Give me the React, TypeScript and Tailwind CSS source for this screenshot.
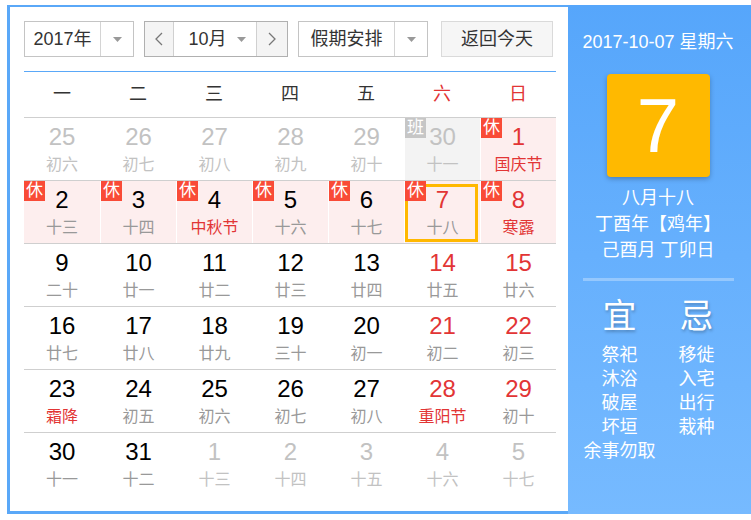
import clsx from 'clsx';

type Day = {
  d: number;
  l: string;
  dim?: boolean;
  red?: boolean;
  lred?: boolean;
  badge?: '休' | '班';
  bg?: 'pink' | 'gray';
  today?: boolean;
};

const weekdays = ['一', '二', '三', '四', '五', '六', '日'];

const rows: Day[][] = [
  [
    { d: 25, l: '初六', dim: true },
    { d: 26, l: '初七', dim: true },
    { d: 27, l: '初八', dim: true },
    { d: 28, l: '初九', dim: true },
    { d: 29, l: '初十', dim: true },
    { d: 30, l: '十一', dim: true, badge: '班', bg: 'gray' },
    { d: 1, l: '国庆节', red: true, lred: true, badge: '休', bg: 'pink' },
  ],
  [
    { d: 2, l: '十三', badge: '休', bg: 'pink' },
    { d: 3, l: '十四', badge: '休', bg: 'pink' },
    { d: 4, l: '中秋节', lred: true, badge: '休', bg: 'pink' },
    { d: 5, l: '十六', badge: '休', bg: 'pink' },
    { d: 6, l: '十七', badge: '休', bg: 'pink' },
    { d: 7, l: '十八', red: true, badge: '休', bg: 'pink', today: true },
    { d: 8, l: '寒露', red: true, lred: true, badge: '休', bg: 'pink' },
  ],
  [
    { d: 9, l: '二十' },
    { d: 10, l: '廿一' },
    { d: 11, l: '廿二' },
    { d: 12, l: '廿三' },
    { d: 13, l: '廿四' },
    { d: 14, l: '廿五', red: true },
    { d: 15, l: '廿六', red: true },
  ],
  [
    { d: 16, l: '廿七' },
    { d: 17, l: '廿八' },
    { d: 18, l: '廿九' },
    { d: 19, l: '三十' },
    { d: 20, l: '初一' },
    { d: 21, l: '初二', red: true },
    { d: 22, l: '初三', red: true },
  ],
  [
    { d: 23, l: '霜降', lred: true },
    { d: 24, l: '初五' },
    { d: 25, l: '初六' },
    { d: 26, l: '初七' },
    { d: 27, l: '初八' },
    { d: 28, l: '重阳节', red: true, lred: true },
    { d: 29, l: '初十', red: true },
  ],
  [
    { d: 30, l: '十一' },
    { d: 31, l: '十二' },
    { d: 1, l: '十三', dim: true },
    { d: 2, l: '十四', dim: true },
    { d: 3, l: '十五', dim: true },
    { d: 4, l: '十六', dim: true },
    { d: 5, l: '十七', dim: true },
  ],
];

const yi = ['祭祀', '沐浴', '破屋', '坏垣', '余事勿取'];
const ji = ['移徙', '入宅', '出行', '栽种'];

function Caret() {
  return (
    <svg width="9" height="5" viewBox="0 0 9 5">
      <path d="M0 0H9L4.5 5Z" fill="#999" />
    </svg>
  );
}

function Chevron({ dir }: { dir: 'l' | 'r' }) {
  return (
    <svg width="8" height="14" viewBox="0 0 8 14">
      <polyline
        points={dir === 'l' ? '7,1 1,7 7,13' : '1,1 7,7 1,13'}
        fill="none"
        stroke="#777"
        strokeWidth="1.3"
      />
    </svg>
  );
}

function Controls() {
  return (
    <div className="flex h-[36px] text-[18px] leading-[34px] text-[#333]">
      <div className="flex w-[110px] border border-[#c4c4c4]">
        <span className="w-[75px] text-center">2017年</span>
        <span className="flex flex-1 items-center justify-center border-l border-[#d4d4d4]">
          <Caret />
        </span>
      </div>
      <div className="ml-[10px] flex w-[144px] border border-[#b0b0b0]">
        <span className="flex w-[29px] items-center justify-center border-r border-[#d0d0d0] bg-[#f4f4f4]">
          <Chevron dir="l" />
        </span>
        <span className="flex w-[82px] items-center justify-center gap-[10px] pl-[4px]">
          10月
          <Caret />
        </span>
        <span className="flex flex-1 items-center justify-center border-l border-[#d0d0d0] bg-[#f4f4f4]">
          <Chevron dir="r" />
        </span>
      </div>
      <div className="ml-[10px] flex w-[130px] border border-[#c4c4c4]">
        <span className="w-[95px] text-center">假期安排</span>
        <span className="flex flex-1 items-center justify-center border-l border-[#d4d4d4]">
          <Caret />
        </span>
      </div>
      <div className="ml-[13px] w-[112px] border border-[#dadada] bg-[#f6f6f6] text-center">返回今天</div>
    </div>
  );
}

function Cell({ day, first }: { day: Day; first: boolean }) {
  return (
    <div
      className={clsx(
        'relative flex flex-col items-center pt-[5px]',
        !first && 'border-l border-white',
        day.bg === 'pink' && 'bg-[#fdeeee]',
        day.bg === 'gray' && 'bg-[#f3f3f3]'
      )}
    >
      {day.today && (
        <div className="absolute top-[3px] right-[2px] bottom-[1px] left-0 border-[3px] border-[#ffb800]" />
      )}
      {day.badge && (
        <span
          className={clsx(
            'absolute top-0 left-0 z-10 h-[20px] w-[21px] text-center text-[17px] leading-[20px] text-white',
            day.badge === '休' ? 'bg-[#f94b37]' : 'bg-[#c6c6c6]'
          )}
        >
          {day.badge}
        </span>
      )}
      <span
        className={clsx(
          'relative text-[24px] leading-[28px]',
          day.dim ? 'text-[#c2c2c2]' : day.red ? 'text-[#e23535]' : 'text-black'
        )}
      >
        {day.d}
      </span>
      <span
        className={clsx(
          'relative mt-[3px] text-[16px] leading-[22px]',
          day.dim ? 'text-[#c2c2c2]' : day.lred ? 'text-[#e23535]' : 'text-[#999]'
        )}
      >
        {day.l}
      </span>
    </div>
  );
}

function Calendar() {
  return (
    <div className="mt-[14px] border-t border-[#5aa8f8]">
      <div className="grid h-[45px] grid-cols-7 items-center text-center text-[18px]">
        {weekdays.map((w, i) => (
          <span key={w} className={i > 4 ? 'text-[#e23535]' : 'text-[#333]'}>
            {w}
          </span>
        ))}
      </div>
      {rows.map((row, r) => (
        <div key={r} className="grid h-[63px] grid-cols-7 border-t border-[#cfcfcf]">
          {row.map((day, i) => (
            <Cell key={i} day={day} first={i === 0} />
          ))}
        </div>
      ))}
    </div>
  );
}

function SidePanel() {
  return (
    <div className="flex w-[183px] flex-col items-center bg-linear-to-b from-[#56a6fb] to-[#76baff] pt-[25px] pr-[3px] text-white">
      <p className="text-[18px] leading-[24px]">2017-10-07 星期六</p>
      <div className="mt-[20px] flex h-[103px] w-[103px] items-center justify-center rounded-[4px] bg-[#ffb900] shadow-[0_2px_5px_rgba(0,0,0,0.25)]">
        <span className="text-[76px] leading-none">7</span>
      </div>
      <div className="mt-[8px] flex flex-col items-center text-[18px] leading-[26px]">
        <p>八月十八</p>
        <p>丁酉年【鸡年】</p>
        <p>己酉月 丁卯日</p>
      </div>
      <div className="mt-[15px] h-[3px] w-[151px] bg-white/30" />
      <div className="mt-[15px] grid w-[154px] grid-cols-2 text-center">
        <div className="flex flex-col items-center">
          <p className="text-[34px] leading-[40px] [text-shadow:1px_2px_3px_rgba(0,0,0,0.25)]">宜</p>
          <div className="mt-[7px] flex flex-col items-center text-[18px] leading-[24px]">
            {yi.map((t) => (
              <p key={t} className="whitespace-nowrap">
                {t}
              </p>
            ))}
          </div>
        </div>
        <div className="flex flex-col items-center">
          <p className="text-[34px] leading-[40px] [text-shadow:1px_2px_3px_rgba(0,0,0,0.25)]">忌</p>
          <div className="mt-[7px] flex flex-col items-center text-[18px] leading-[24px]">
            {ji.map((t) => (
              <p key={t}>{t}</p>
            ))}
          </div>
        </div>
      </div>
    </div>
  );
}

export default function App() {
  return (
    <div className="h-[520px] w-[751px] bg-white pt-[5px] pl-[7px] font-['Liberation_Sans','Noto_Sans_CJK_SC',sans-serif]">
      <div className="flex h-[509px] w-[744px]">
        <div className="w-[561px] border-t-2 border-b-[3px] border-l-[3px] border-[#5aa8f8] pt-[14px] pr-[12px] pl-[14px]">
          <Controls />
          <Calendar />
        </div>
        <SidePanel />
      </div>
    </div>
  );
}
